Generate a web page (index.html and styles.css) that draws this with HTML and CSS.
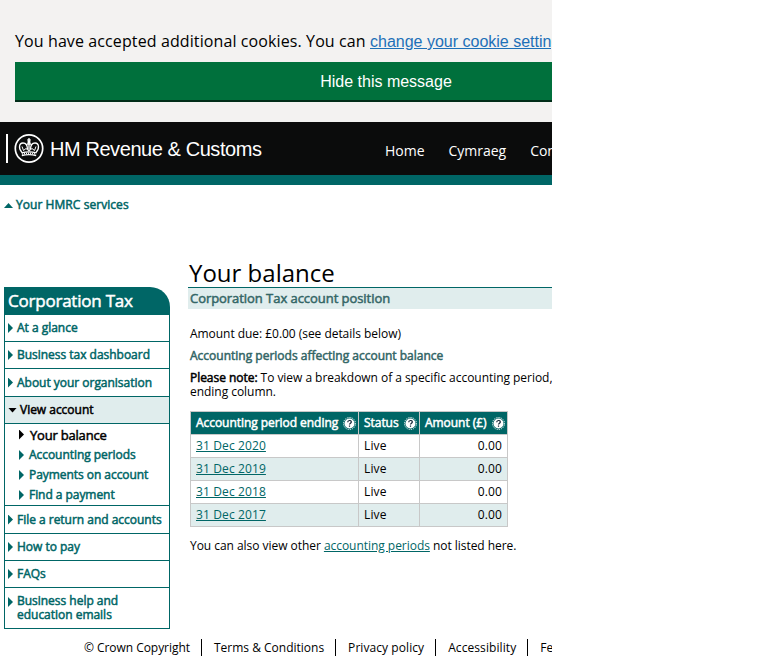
FILE: index.html
```
<!DOCTYPE html>
<html lang="en">
<head>
<meta charset="utf-8">
<title>Your balance</title>
<link rel="stylesheet" href="styles.css">
</head>
<body>
<svg class="defs" width="0" height="0" aria-hidden="true">
  <symbol id="help" viewBox="0 0 13 13">
    <circle cx="6.5" cy="6.5" r="6" fill="none" stroke="#fff" stroke-width="1" stroke-dasharray="1 .9"/>
    <circle cx="6.5" cy="6.5" r="5" fill="#fff"/>
    <path d="M4.700 5.300C4.700 2.900 8.300 3 8.300 4.900C8.300 6.200 6.500 6.200 6.500 7.600M6.500 8.500V9.700" fill="none" stroke="#123" stroke-width="1.200"/>
  </symbol>
</svg>
<div class="viewport">
  <section class="cookie">
    <p><span>You have accepted additional cookies. You can </span><a href="#">change your cookie settings</a></p>
    <button>Hide this message</button>
  </section>
  <header class="header">
    <svg class="logo" width="260" height="32" viewBox="0 0 260 32">
      <path d="M2 2V31" stroke="#fff" stroke-width="2"/>
      <circle cx="24" cy="16.500" r="13.700" fill="none" stroke="#fff" stroke-width="1.700"/>
      <g fill="none" stroke="#fff" stroke-width="1.300">
        <path d="M17 20.500C13.300 17 13.800 11 18 11C21 11 22.500 13.500 22.500 17.500M31 20.500C34.700 17 34.200 11 30 11C27 11 25.500 13.500 25.500 17.500"/>
        <path d="M24 6V18M22.300 8H25.700M22 12H26"/>
        <path d="M17 14.500L18.500 18.500L21 16.500L24 19L27 16.500L29.500 18.500L31 14.500" stroke-width="1"/>
        <path d="M16.500 20.800Q24 18.800 31.500 20.800M16.800 23.500Q24 21.800 31.200 23.500"/>
        <path d="M17 22.200Q24 20.300 31 22.200" stroke-dasharray="1 1"/>
      </g>
      <circle cx="24" cy="10" r="1.600" fill="#fff"/>
      <text x="45" y="24" textLength="212" lengthAdjust="spacing">HM Revenue &amp; Customs</text>
    </svg>
    <nav class="topnav"><a>Home</a><a>Cymraeg</a><a>Contact</a></nav>
  </header>
  <div class="crumb"><i class="tri up"></i><a class="bold">Your HMRC services</a></div>
  <div class="columns">
    <aside class="side">
      <h2 class="bold">Corporation Tax</h2>
      <ul class="menu bold">
        <li class="r26"><i class="tri"></i><a>At a glance</a></li>
        <li class="r26"><i class="tri"></i><a>Business tax dashboard</a></li>
        <li class="r27"><i class="tri"></i><a>About your organisation</a></li>
        <li class="r26 open"><i class="tri down"></i><a>View account</a></li>
        <li class="group">
          <ul>
            <li class="current"><i class="tri"></i><a>Your balance</a></li>
            <li><i class="tri"></i><a>Accounting periods</a></li>
            <li><i class="tri"></i><a>Payments on account</a></li>
            <li><i class="tri"></i><a>Find a payment</a></li>
          </ul>
        </li>
        <li class="r27"><i class="tri"></i><a>File a return and accounts</a></li>
        <li class="r26"><i class="tri"></i><a>How to pay</a></li>
        <li class="r26"><i class="tri"></i><a>FAQs</a></li>
        <li class="tall"><i class="tri"></i><a>Business help and<br>education emails</a></li>
      </ul>
    </aside>
    <main class="main">
      <h1>Your balance</h1>
      <h2 class="bold">Corporation Tax account position</h2>
      <div class="copy">
        <p>Amount due: £0.00 (see details below)</p>
        <h3 class="bold">Accounting periods affecting account balance</h3>
        <p><b class="bold">Please note:</b> To view a breakdown of a specific accounting period,<br>ending column.</p>
        <table>
          <thead><tr>
            <th class="c1"><div><span class="bold">Accounting period ending</span><svg><use href="#help"/></svg></div></th>
            <th class="c2"><div><span class="bold">Status</span><svg><use href="#help"/></svg></div></th>
            <th class="c3"><div><span class="bold">Amount (£)</span><svg><use href="#help"/></svg></div></th>
          </tr></thead>
          <tbody>
            <tr><td><a>31 Dec 2020</a></td><td>Live</td><td class="num">0.00</td></tr>
            <tr><td><a>31 Dec 2019</a></td><td>Live</td><td class="num">0.00</td></tr>
            <tr><td><a>31 Dec 2018</a></td><td>Live</td><td class="num">0.00</td></tr>
            <tr><td><a>31 Dec 2017</a></td><td>Live</td><td class="num">0.00</td></tr>
          </tbody>
        </table>
        <p>You can also view other <a>accounting periods</a> not listed here.</p>
      </div>
    </main>
  </div>
  <footer class="footer"><a>© Crown Copyright</a><a>Terms &amp; Conditions</a><a>Privacy policy</a><a>Accessibility</a><a>Feedback</a></footer>
</div>
</body>
</html>
```
FILE: styles.css
```
* { box-sizing: border-box; }
body { margin: 0; background: #fff; font: 12px/14px "Open Sans", "Noto Sans", sans-serif; color: #000; overflow: hidden; }
h1, h2, h3, p, ul { margin: 0; padding: 0; font-weight: 400; }
ul { list-style: none; }
.defs { position: absolute; }
.viewport { width: 552px; height: 661px; overflow: hidden; white-space: nowrap; }
.bold { font-weight: 400; -webkit-text-stroke: .5px currentColor; }

.cookie { width: 772px; height: 122px; padding: 30px 15px 0; background: #f3f2f1; }
.cookie p { height: 32px; font-size: 16px; line-height: 22px; }
.cookie span { letter-spacing: .105px; }
.cookie a { font-family: "Liberation Sans", sans-serif; color: #1d70b8; }
.cookie button { display: block; width: 742px; height: 40px; padding: 2px 0 0; border: 0; border-bottom: 2px solid #002d18; background: #00703c; color: #fff; font: 16px "Liberation Sans", sans-serif; }

.header { display: flex; width: 778px; height: 63px; border-bottom: 10px solid #006666; background: #0b0c0c; }
.logo { margin: 10px 0 0 5px; flex: none; }
.logo text { font: 20px "Liberation Sans", sans-serif; fill: #fff; }
.topnav { display: flex; gap: 24px; margin: 19px 0 0 120px; color: #fff; font-size: 14px; line-height: 20px; letter-spacing: -.02px; }

.crumb { display: flex; align-items: flex-start; gap: 3px; height: 61px; padding: 13px 0 0 4px; color: #006666; letter-spacing: .06px; }
.tri { flex: none; width: 5px; height: 10px; background: currentColor; clip-path: polygon(0 0, 100% 50%, 0 100%); }
.tri.up { width: 9px; height: 5px; margin-top: 5px; clip-path: polygon(50% 0, 100% 100%, 0 100%); }
.tri.down { width: 9px; height: 5px; clip-path: polygon(0 0, 100% 0, 50% 100%); }

.columns { display: flex; gap: 18px; height: 390px; padding-left: 4px; }
.side { flex: none; width: 166px; padding-top: 41px; }
.side h2 { height: 28px; padding-left: 4px; border-radius: 0 20px 0 0; background: #006666; color: #fff; font-size: 17px; line-height: 28px; letter-spacing: -.22px; }
.menu { border: solid #006666; border-width: 0 1px 1px; color: #006666; letter-spacing: -.02px; }
.menu > li { display: flex; align-items: center; gap: 4px; padding-left: 3px; }
.menu > li + li { border-top: 1px solid #006666; }
.menu .r26 { height: 27px; }
.menu > .r26:first-child { height: 26px; }
.menu .r27 { height: 28px; }
.menu .open { gap: 3px; background: #e0eded; color: #000; }
.menu > .group { height: 82px; padding: 0 0 0 14px; align-items: flex-start; }
.group li { display: flex; align-items: center; gap: 5px; height: 20px; letter-spacing: -.05px; }
.group .current { height: 21px; gap: 6px; color: #000; font-size: 13px; letter-spacing: -.2px; }
.menu > .tall { height: 41px; align-items: flex-start; padding-top: 6px; }
.tall .tri { margin-top: 3px; }

.main { width: 572px; padding-top: 11px; flex: none; }
.main h1 { height: 31px; padding-left: 1px; font-size: 24px; line-height: 32px; border-bottom: 1px solid #006666; }
.main h2 { height: 21px; padding-left: 2px; background: #e0eded; color: #336666; font-size: 13px; line-height: 21px; letter-spacing: -.05px; }
.copy { padding: 18px 0 0 2px; }
.copy p { margin-bottom: 8px; letter-spacing: -.04px; }
.copy h3 { margin-bottom: 8px; font-size: 12px; color: #336666; }
.copy a { color: #006666; text-decoration: underline; }
table { width: 318px; margin: 12px 0; table-layout: fixed; border-collapse: collapse; }
th, td { height: 23px; padding: 0 5px; border: 1px solid #c8c8c8; text-align: left; font-weight: 400; }
td { letter-spacing: .12px; }
th { background: #006666; color: #fff; padding-right: 2px; letter-spacing: -.05px; }
th div { display: flex; justify-content: space-between; align-items: center; }
th svg { width: 13px; height: 13px; flex: none; }
.c1 { width: 168px; }
.c2 { width: 61px; }
.c3 { width: 88px; }
.num { text-align: right; }
tbody tr:nth-child(even) { background: #e0eded; }

.footer { display: flex; padding: 3px 0 0 72px; }
.footer a { height: 17px; padding: 0 11px 0 12px; line-height: 17px; }
.footer a:first-child { letter-spacing: -.05px; }
.footer a:nth-child(4) { letter-spacing: .08px; }
.footer a:nth-child(3) { letter-spacing: .07px; }
.footer a + a { border-left: 1px solid #000; }
```
